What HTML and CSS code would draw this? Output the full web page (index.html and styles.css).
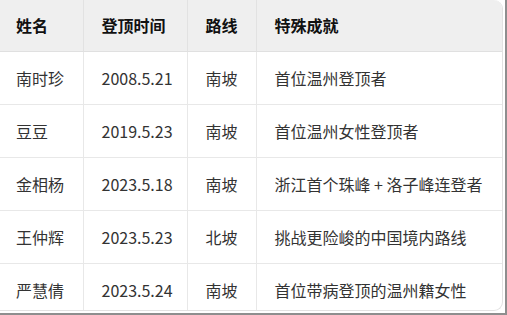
FILE: index.html
```html
<!DOCTYPE html>
<html lang="zh">
<head>
<meta charset="utf-8">
<link rel="stylesheet" href="styles.css">
</head>
<body>
<div class="frame">
  <div class="card">
    <table class="tbl">
      <colgroup>
        <col class="c1"><col class="c2"><col class="c3"><col class="c4">
      </colgroup>
      <thead>
        <tr><th>姓名</th><th>登顶时间</th><th>路线</th><th>特殊成就</th></tr>
      </thead>
      <tbody>
        <tr><td>南时珍</td><td>2008.5.21</td><td>南坡</td><td>首位温州登顶者</td></tr>
        <tr><td>豆豆</td><td>2019.5.23</td><td>南坡</td><td>首位温州女性登顶者</td></tr>
        <tr><td>金相杨</td><td>2023.5.18</td><td>南坡</td><td>浙江首个珠峰 + 洛子峰连登者</td></tr>
        <tr><td>王仲辉</td><td>2023.5.23</td><td>北坡</td><td>挑战更险峻的中国境内路线</td></tr>
        <tr><td>严慧倩</td><td>2023.5.24</td><td>南坡</td><td>首位带病登顶的温州籍女性</td></tr>
      </tbody>
    </table>
  </div>
</div>
</body>
</html>
```

FILE: styles.css
```css
html, body {
  margin: 0;
  padding: 0;
  background: #ffffff;
}
.frame {
  width: 505px;
  height: 313px;
  border-right: 2px solid #8e8e8e;
  border-bottom: 2px solid #8e8e8e;
  overflow: hidden;
  background: #ffffff;
}
.card {
  width: 503px;
  height: 311px;
  border-right: 1px solid #e2e2e2;
  border-bottom: 1px solid #e2e2e2;
  border-radius: 0 9px 9px 0;
  overflow: hidden;
  box-sizing: border-box;
}
.tbl {
  width: 100%;
  border-collapse: collapse;
  table-layout: fixed;
  font-family: "Noto Sans CJK SC", "Noto Sans", sans-serif;
  font-size: 16px;
  color: #333333;
}
.c1 { width: 83px; }
.c2 { width: 104px; }
.c3 { width: 69px; }
.tbl th {
  height: 51px;
  background: #efefef;
  color: #111111;
  font-weight: 700;
  text-align: left;
  padding: 0 0 0 16px;
  border-right: 1px solid #e2e2e2;
  border-bottom: 1px solid #e0e0e0;
  box-sizing: border-box;
}
.tbl td {
  height: 52px;
  padding: 0 0 0 16px;
  border-right: 1px solid #e8e8e8;
  border-bottom: 1px solid #e8e8e8;
  white-space: nowrap;
  vertical-align: middle;
}
.tbl td:nth-child(2), .tbl th:nth-child(2),
.tbl td:nth-child(3), .tbl th:nth-child(3),
.tbl td:nth-child(4), .tbl th:nth-child(4) {
  padding-left: 18px;
}
.tbl th:last-child, .tbl td:last-child {
  border-right: none;
}
.tbl tbody tr:last-child td {
  border-bottom: none;
}
```
